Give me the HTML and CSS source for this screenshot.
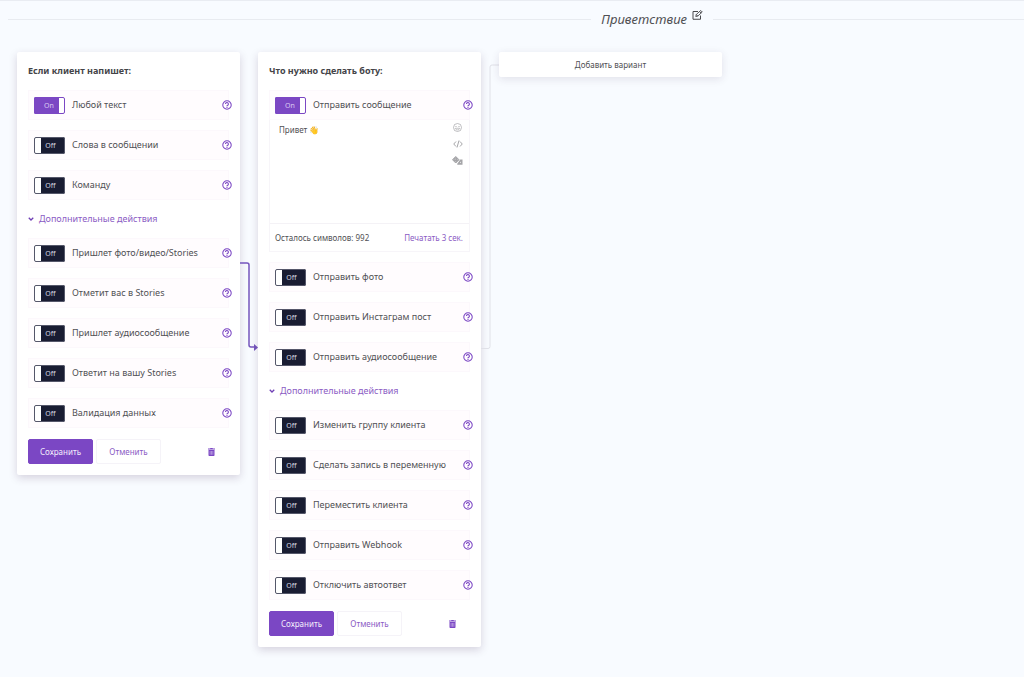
FILE: index.html
```html
<!DOCTYPE html>
<html lang="ru">
<head>
<meta charset="utf-8">
<title>Приветствие</title>
<link rel="stylesheet" href="styles.css">
</head>
<body>
<svg class="sprite" aria-hidden="true">
  <symbol id="help" viewBox="0 0 18 18"><circle cx="9" cy="9" r="7.6" fill="none" stroke="currentColor" stroke-width="1.9"/><path d="M6.300 7.300a2.600 2.600 0 1 1 4 2.100c-.9.5-1.300.8-1.300 1.600" fill="none" stroke="currentColor" stroke-width="2"/><circle cx="9" cy="13.1" r="1.200" fill="currentColor"/></symbol>
  <symbol id="trash" viewBox="0 0 14 16"><path d="M0 1.200h4.200L5 0h4l.8 1.200H14v1.700H0z" fill="currentColor"/><path d="M1 3.800h12V14.500a1.500 1.500 0 0 1-1.500 1.500h-9A1.500 1.500 0 0 1 1 14.500z" fill="currentColor"/><path d="M4.300 6v7.500M7 6v7.500M9.700 6v7.500" stroke="#fff" stroke-width=".8"/></symbol>
  <symbol id="chevron" viewBox="0 0 12 8"><path d="M1.500 1.500 6 6l4.500-4.500" fill="none" stroke="currentColor" stroke-width="2.600"/></symbol>
</svg>
<header class="page-head">
  <span class="rule rule-left"></span>
  <h1 class="page-title">Приветствие
    <button class="icon-button edit" type="button" aria-label="Переименовать"><svg viewBox="0 0 22 20" width="11" height="10"><path d="M12 3H2v15.500h15V11" fill="none" stroke="currentColor" stroke-width="2"/><path d="m7.500 13 1-4L17.500 1l3 3-9 8.200zM15.200 3.200l3 3M8.500 9l3 3.200" fill="none" stroke="currentColor" stroke-width="1.800" stroke-linejoin="round"/></svg></button>
  </h1>
  <span class="rule rule-right"></span>
</header>
<main class="board">
  <form class="card">
    <h2 class="card-title">Если клиент напишет:</h2>
    <div class="row"><label class="option"><input type="checkbox" checked><span class="switch"><span class="on">On</span><span class="off">Off</span></span>Любой текст</label><button class="icon-button" type="button" aria-label="Справка"><svg class="help"><use href="#help"/></svg></button></div>
    <div class="row"><label class="option"><input type="checkbox"><span class="switch"><span class="on">On</span><span class="off">Off</span></span>Слова в сообщении</label><button class="icon-button" type="button" aria-label="Справка"><svg class="help"><use href="#help"/></svg></button></div>
    <div class="row"><label class="option"><input type="checkbox"><span class="switch"><span class="on">On</span><span class="off">Off</span></span>Команду</label><button class="icon-button" type="button" aria-label="Справка"><svg class="help"><use href="#help"/></svg></button></div>
    <button class="more" type="button"><svg class="chevron"><use href="#chevron"/></svg>Дополнительные действия</button>
    <div class="row"><label class="option"><input type="checkbox"><span class="switch"><span class="on">On</span><span class="off">Off</span></span>Пришлет фото/видео/Stories</label><button class="icon-button" type="button" aria-label="Справка"><svg class="help"><use href="#help"/></svg></button></div>
    <div class="row"><label class="option"><input type="checkbox"><span class="switch"><span class="on">On</span><span class="off">Off</span></span>Отметит вас в Stories</label><button class="icon-button" type="button" aria-label="Справка"><svg class="help"><use href="#help"/></svg></button></div>
    <div class="row"><label class="option"><input type="checkbox"><span class="switch"><span class="on">On</span><span class="off">Off</span></span>Пришлет аудиосообщение</label><button class="icon-button" type="button" aria-label="Справка"><svg class="help"><use href="#help"/></svg></button></div>
    <div class="row"><label class="option"><input type="checkbox"><span class="switch"><span class="on">On</span><span class="off">Off</span></span>Ответит на вашу Stories</label><button class="icon-button" type="button" aria-label="Справка"><svg class="help"><use href="#help"/></svg></button></div>
    <div class="row"><label class="option"><input type="checkbox"><span class="switch"><span class="on">On</span><span class="off">Off</span></span>Валидация данных</label><button class="icon-button" type="button" aria-label="Справка"><svg class="help"><use href="#help"/></svg></button></div>
    <div class="actions"><button class="button primary" type="button">Сохранить</button><button class="button" type="button">Отменить</button><button class="icon-button delete" type="button" aria-label="Удалить"><svg class="trash"><use href="#trash"/></svg></button></div>
  </form>
  <svg class="link link-active" viewBox="0 0 18 305" width="18" height="305" aria-hidden="true"><path d="M0 211h7q2 0 2 2v80q0 2 2 2h5" fill="none" stroke="currentColor" stroke-width="1.500"/><path d="m14 292 4 3.500-4 3.500z" fill="currentColor"/></svg>
  <form class="card">
    <h2 class="card-title">Что нужно сделать боту:</h2>
    <div class="group">
      <div class="row"><label class="option"><input type="checkbox" checked><span class="switch"><span class="on">On</span><span class="off">Off</span></span>Отправить сообщение</label><button class="icon-button" type="button" aria-label="Справка"><svg class="help"><use href="#help"/></svg></button></div>
      <div class="editor">
        <div class="editor-body">
          <textarea class="message" aria-label="Сообщение">Привет 👋</textarea>
          <div class="tools">
            <button class="icon-button" type="button" aria-label="Смайлы"><svg viewBox="0 0 18 18" width="9" height="9"><circle cx="9" cy="9" r="8" fill="none" stroke="currentColor" stroke-width="1.400"/><circle cx="6" cy="7" r="1.200" fill="currentColor"/><circle cx="12" cy="7" r="1.200" fill="currentColor"/><path d="M4.500 10.500c1.500 4.500 7.500 4.500 9 0z" fill="none" stroke="currentColor" stroke-width="1.300"/></svg></button>
            <button class="icon-button" type="button" aria-label="Переменные"><svg viewBox="0 0 20 16" width="10" height="8"><path d="M6 3 1.500 8 6 13M14 3l4.500 5L14 13M12 1 8 15" fill="none" stroke="currentColor" stroke-width="2"/></svg></button>
            <button class="icon-button" type="button" aria-label="Случайный текст"><svg viewBox="0 0 22 18" width="11" height="9"><path d="M7.500 1 14 7.500 7.500 14 1 7.500z" fill="currentColor" stroke="currentColor" stroke-width="2" stroke-linejoin="round"/><path d="M16.500 7H21v10.500H10.500v-2z" fill="currentColor"/><g fill="#fff"><circle cx="4" cy="7.500" r=".7"/><circle cx="7.500" cy="7.500" r=".7"/><circle cx="11" cy="7.500" r=".7"/><circle cx="7.500" cy="4" r=".7"/><circle cx="7.500" cy="11" r=".7"/><circle cx="17" cy="12.500" r="1"/></g></svg></button>
          </div>
        </div>
        <div class="editor-foot"><span>Осталось символов: 992</span><button class="text-button" type="button">Печатать 3 сек.</button></div>
      </div>
    </div>
    <div class="row"><label class="option"><input type="checkbox"><span class="switch"><span class="on">On</span><span class="off">Off</span></span>Отправить фото</label><button class="icon-button" type="button" aria-label="Справка"><svg class="help"><use href="#help"/></svg></button></div>
    <div class="row"><label class="option"><input type="checkbox"><span class="switch"><span class="on">On</span><span class="off">Off</span></span>Отправить Инстаграм пост</label><button class="icon-button" type="button" aria-label="Справка"><svg class="help"><use href="#help"/></svg></button></div>
    <div class="row"><label class="option"><input type="checkbox"><span class="switch"><span class="on">On</span><span class="off">Off</span></span>Отправить аудиосообщение</label><button class="icon-button" type="button" aria-label="Справка"><svg class="help"><use href="#help"/></svg></button></div>
    <button class="more" type="button"><svg class="chevron"><use href="#chevron"/></svg>Дополнительные действия</button>
    <div class="row"><label class="option"><input type="checkbox"><span class="switch"><span class="on">On</span><span class="off">Off</span></span>Изменить группу клиента</label><button class="icon-button" type="button" aria-label="Справка"><svg class="help"><use href="#help"/></svg></button></div>
    <div class="row"><label class="option"><input type="checkbox"><span class="switch"><span class="on">On</span><span class="off">Off</span></span>Сделать запись в переменную</label><button class="icon-button" type="button" aria-label="Справка"><svg class="help"><use href="#help"/></svg></button></div>
    <div class="row"><label class="option"><input type="checkbox"><span class="switch"><span class="on">On</span><span class="off">Off</span></span>Переместить клиента</label><button class="icon-button" type="button" aria-label="Справка"><svg class="help"><use href="#help"/></svg></button></div>
    <div class="row"><label class="option"><input type="checkbox"><span class="switch"><span class="on">On</span><span class="off">Off</span></span>Отправить Webhook</label><button class="icon-button" type="button" aria-label="Справка"><svg class="help"><use href="#help"/></svg></button></div>
    <div class="row"><label class="option"><input type="checkbox"><span class="switch"><span class="on">On</span><span class="off">Off</span></span>Отключить автоответ</label><button class="icon-button" type="button" aria-label="Справка"><svg class="help"><use href="#help"/></svg></button></div>
    <div class="actions"><button class="button primary" type="button">Сохранить</button><button class="button" type="button">Отменить</button><button class="icon-button delete" type="button" aria-label="Удалить"><svg class="trash"><use href="#trash"/></svg></button></div>
  </form>
  <svg class="link" viewBox="0 0 18 305" width="18" height="305" aria-hidden="true"><path d="M0 296.500h7q2 0 2-2V15q0-2 2-2h7" fill="none" stroke="currentColor"/></svg>
  <button class="add" type="button">Добавить вариант</button>
</main>
</body>
</html>
```
FILE: styles.css
```css
* { box-sizing: border-box; }

body {
  margin: 0;
  min-height: 100vh;
  border-top: 1px solid #e9ecf2;
  background: #f8fbff;
  color: #505054;
  font: 9px/18px "Noto Sans", "Open Sans", sans-serif;
}

button, textarea { font: inherit; color: inherit; }
button { padding: 0; border: 0; background: none; cursor: pointer; }
svg { display: block; }
.sprite { position: absolute; width: 0; height: 0; }

.page-head {
  display: flex;
  align-items: center;
  gap: 10px;
  padding: 6px 0 0 8px;
}
.rule { height: 1px; background: #e8ebf0; }
.rule-left { flex: 15; }
.rule-right { flex: 8; }
.page-title {
  display: flex;
  align-items: flex-start;
  gap: 5px;
  margin: 0;
  font-size: 13px;
  font-weight: 400;
  font-style: italic;
  line-height: 24px;
}
.icon-button { display: flex; color: #7b47c4; }
.edit { padding-top: 3px; color: #48484c; }

.board {
  display: flex;
  align-items: flex-start;
  padding: 21px 17px 28px;
}
.card {
  display: flex;
  flex-direction: column;
  gap: 10px;
  flex: 0 0 223px;
  padding: 10px 11px 11px;
  border-radius: 2px;
  background: #fff;
  box-shadow: 0 3px 8px rgba(60, 30, 70, .18);
}
.card-title {
  margin: 0;
  color: #444448;
  font-size: 9px;
  line-height: 18px;
  font-weight: 700;
}

.row {
  display: flex;
  align-items: center;
  justify-content: space-between;
  height: 30px;
  padding-left: 5px;
  background: #fffcfe;
  border: 1px solid #fcf8fc;
}
.option { display: flex; align-items: center; gap: 7px; white-space: nowrap; cursor: pointer; }
.option input { position: absolute; opacity: 0; }
.switch {
  width: 31px;
  height: 17px;
  padding-right: 4px;
  border: 1px solid #191c32;
  border-left: 7px solid #fff;
  border-radius: 2px;
  background: #191c32;
  outline: 1px solid #55576a;
  outline-offset: -1px;
  color: #d8d8e0;
  font-size: 7px;
  line-height: 15px;
  text-align: center;
}
.on { display: none; }
input:checked + .switch {
  padding: 0 0 0 4px;
  border: 1px solid #7b47c4;
  border-right: 6px solid #fff;
  background: #7b47c4;
  outline-color: #7b47c4;
  color: #dccbf2;
}
input:checked + .switch .on { display: inline; }
input:checked + .switch .off { display: none; }
input:focus-visible + .switch { outline-color: #a77be0; }

.row .icon-button { margin-right: -4px; }
.help { width: 10px; height: 10px; }
.trash { width: 7px; height: 8px; }
.chevron { width: 6px; height: 4px; }

.more, .text-button { color: #8b5cc4; }
.more { display: flex; align-items: center; gap: 5px; height: 18px; }
.more .chevron { color: #6f3fb5; }

.editor { border: 1px solid #f7f5f9; border-top: 0; }
.editor-body { display: flex; height: 103px; }
.message {
  flex: 1;
  min-width: 0;
  padding: 1px 9px;
  border: 0;
  outline: 0;
  resize: none;
  background: none;
  font-size: 8px;
}
.tools {
  display: flex;
  flex-direction: column;
  align-items: center;
  gap: 8px;
  padding: 3px 6px;
}
.tools .icon-button { color: #a5a5a8; }
.editor-foot {
  display: flex;
  align-items: center;
  justify-content: space-between;
  height: 28px;
  padding: 0 6px 0 5px;
  border-top: 1px solid #f4f2f6;
  font-size: 8px;
  white-space: nowrap;
}

.actions { display: flex; align-items: center; gap: 3px; padding-top: 1px; }
.button {
  width: 65px;
  height: 25px;
  border: 1px solid #f5f3f8;
  border-radius: 2px;
  color: #8b5cc4;
  font-size: 8px;
}
.primary { border-color: #7b47c4; background: #7b47c4; color: #f4edfb; }
.delete { margin: 0 14px 0 auto; }

.link { flex: none; color: #e0e1e8; }
.link-active { color: #7455bd; }

.add {
  flex: 0 0 223px;
  height: 25px;
  border-radius: 2px;
  background: #fff;
  box-shadow: 0 2px 8px rgba(60, 30, 70, .12);
  font-size: 8px;
}
```
